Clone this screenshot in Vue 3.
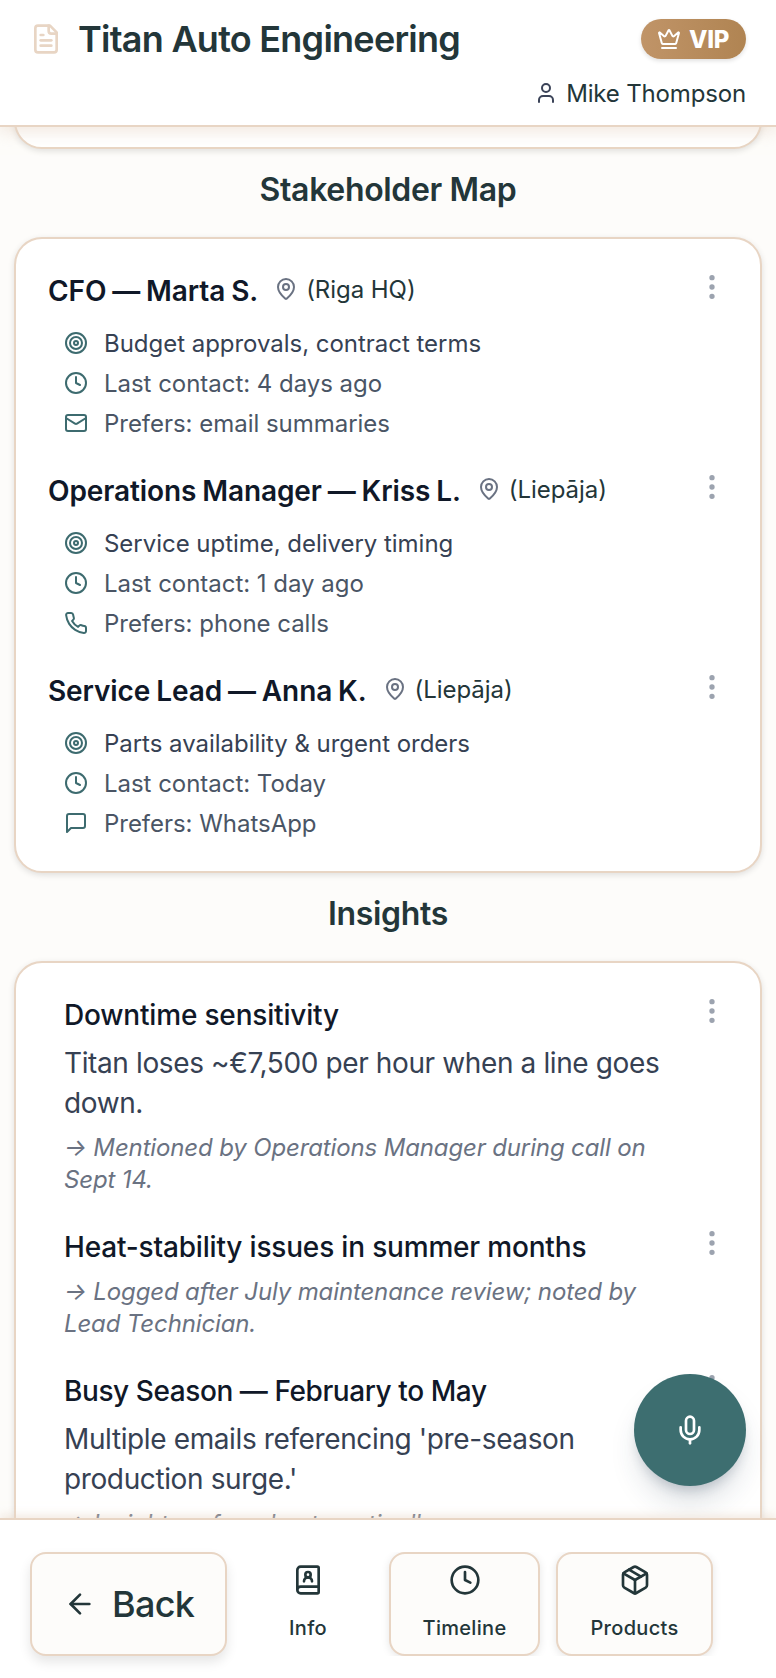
<script setup>
import { ref } from 'vue'

// inner shapes of the 24x24 stroke icons
const icons = {
  file: '<path d="M15 2H6a2 2 0 0 0-2 2v16a2 2 0 0 0 2 2h12a2 2 0 0 0 2-2V7Z"/><path d="M14 2v4a2 2 0 0 0 2 2h4"/><path d="M10 9H8"/><path d="M16 13H8"/><path d="M16 17H8"/>',
  crown: '<path d="M11.562 3.266a.5.5 0 0 1 .876 0L15.39 8.87a1 1 0 0 0 1.516.294L21.183 5.5a.5.5 0 0 1 .798.519l-2.834 10.246a1 1 0 0 1-.956.734H5.81a1 1 0 0 1-.957-.734L2.02 6.02a.5.5 0 0 1 .798-.519l4.276 3.664a1 1 0 0 0 1.516-.294z"/><path d="M5 21h14"/>',
  user: '<path d="M19 21v-2a4 4 0 0 0-4-4H9a4 4 0 0 0-4 4v2"/><circle cx="12" cy="7" r="4"/>',
  pin: '<path d="M20 10c0 4.993-5.539 10.193-7.399 11.799a1 1 0 0 1-1.202 0C9.539 20.193 4 14.993 4 10a8 8 0 0 1 16 0"/><circle cx="12" cy="10" r="3"/>',
  target: '<circle cx="12" cy="12" r="10"/><circle cx="12" cy="12" r="6"/><circle cx="12" cy="12" r="2"/>',
  clock: '<circle cx="12" cy="12" r="10"/><path d="M12 6v6l4 2"/>',
  mail: '<rect width="20" height="16" x="2" y="4" rx="2"/><path d="m22 7-8.97 5.7a1.94 1.94 0 0 1-2.06 0L2 7"/>',
  phone: '<path d="M22 16.92v3a2 2 0 0 1-2.18 2 19.79 19.79 0 0 1-8.63-3.07 19.5 19.5 0 0 1-6-6 19.79 19.79 0 0 1-3.07-8.67A2 2 0 0 1 4.11 2h3a2 2 0 0 1 2 1.72 12.84 12.84 0 0 0 .7 2.81 2 2 0 0 1-.45 2.11L8.09 9.91a16 16 0 0 0 6 6l1.27-1.27a2 2 0 0 1 2.11-.45 12.84 12.84 0 0 0 2.81.7A2 2 0 0 1 22 16.92z"/>',
  message: '<path d="M21 15a2 2 0 0 1-2 2H7l-4 4V5a2 2 0 0 1 2-2h14a2 2 0 0 1 2 2z"/>',
  more: '<circle cx="12" cy="5" r="1"/><circle cx="12" cy="12" r="1"/><circle cx="12" cy="19" r="1"/>',
  mic: '<path d="M12 2a3 3 0 0 0-3 3v7a3 3 0 0 0 6 0V5a3 3 0 0 0-3-3Z"/><path d="M19 10v2a7 7 0 0 1-14 0v-2"/><path d="M12 19v3"/>',
  back: '<path d="m12 19-7-7 7-7"/><path d="M19 12H5"/>',
  info: '<path d="M15 13a3 3 0 1 0-6 0"/><path d="M4 19.5v-15A2.5 2.5 0 0 1 6.5 2H19a1 1 0 0 1 1 1v18a1 1 0 0 1-1 1H6.5a1 1 0 0 1 0-5H20"/><circle cx="12" cy="8" r="2"/>',
  box: '<path d="M11 21.73a2 2 0 0 0 2 0l7-4A2 2 0 0 0 21 16V8a2 2 0 0 0-1-1.73l-7-4a2 2 0 0 0-2 0l-7 4A2 2 0 0 0 3 8v8a2 2 0 0 0 1 1.73z"/><path d="M12 22V12"/><path d="m3.3 7 8.7 5 8.7-5"/><path d="m7.5 4.27 9 5.15"/>'
}

const stakeholders = [
  { name: 'CFO — Marta S.', place: 'Riga HQ', focus: 'Budget approvals, contract terms', last: '4 days ago', prefers: 'email summaries', icon: 'mail' },
  { name: 'Operations Manager — Kriss L.', place: 'Liepāja', focus: 'Service uptime, delivery timing', last: '1 day ago', prefers: 'phone calls', icon: 'phone' },
  { name: 'Service Lead — Anna K.', place: 'Liepāja', focus: 'Parts availability & urgent orders', last: 'Today', prefers: 'WhatsApp', icon: 'message' }
]

const insights = [
  { title: 'Downtime sensitivity', text: 'Titan loses ~€7,500 per hour when a line goes down.', note: 'Mentioned by Operations Manager during call on Sept 14.' },
  { title: 'Heat-stability issues in summer months', note: 'Logged after July maintenance review; noted by Lead Technician.' },
  { title: 'Busy Season — February to May', text: "Multiple emails referencing 'pre-season production surge.'", note: 'Insight surfaced automatically.' }
]

const tabs = [
  { id: 'info', label: 'Info', icon: 'info' },
  { id: 'timeline', label: 'Timeline', icon: 'clock' },
  { id: 'products', label: 'Products', icon: 'box' }
]
const activeTab = ref('info')
</script>

<template>
  <div class="screen">
    <header class="top-bar">
      <div class="title-row">
        <svg class="icon large file-icon" viewBox="0 0 24 24" v-html="icons.file"></svg>
        <h1>Titan Auto Engineering</h1>
        <span class="vip">
          <svg class="icon" viewBox="0 0 24 24" v-html="icons.crown"></svg>
          <span>VIP</span>
        </span>
      </div>
      <div class="owner">
        <svg class="icon" viewBox="0 0 24 24" v-html="icons.user"></svg>
        <span>Mike Thompson</span>
      </div>
    </header>

    <main>
      <!-- tail of the card that is scrolled under the header -->
      <section class="card scrolled"></section>

      <h2>Stakeholder Map</h2>
      <section class="card">
        <article v-for="person in stakeholders" :key="person.name" class="entry">
          <div class="person">
            <div class="person-head">
              <h3>{{ person.name }}</h3>
              <span class="place">
                <svg class="icon" viewBox="0 0 24 24" v-html="icons.pin"></svg>
                <span>({{ person.place }})</span>
              </span>
            </div>
            <ul>
              <li class="focus">
                <svg class="icon" viewBox="0 0 24 24" v-html="icons.target"></svg>
                <span>{{ person.focus }}</span>
              </li>
              <li>
                <svg class="icon" viewBox="0 0 24 24" v-html="icons.clock"></svg>
                <span>Last contact: {{ person.last }}</span>
              </li>
              <li>
                <svg class="icon" viewBox="0 0 24 24" v-html="icons[person.icon]"></svg>
                <span>Prefers: {{ person.prefers }}</span>
              </li>
            </ul>
          </div>
          <button class="more" aria-label="More">
            <svg class="icon large" viewBox="0 0 24 24" v-html="icons.more"></svg>
          </button>
        </article>
      </section>

      <h2>Insights</h2>
      <section class="card">
        <article v-for="item in insights" :key="item.title" class="entry">
          <div class="insight">
            <h4 :class="{ dashed: item.title.includes('—') }">{{ item.title }}</h4>
            <p v-if="item.text" class="text">{{ item.text }}</p>
            <p class="note">→ {{ item.note }}</p>
          </div>
          <button class="more" aria-label="More">
            <svg class="icon large" viewBox="0 0 24 24" v-html="icons.more"></svg>
          </button>
        </article>
      </section>
    </main>

    <button class="mic" aria-label="Record">
      <svg class="icon large" viewBox="0 0 24 24" v-html="icons.mic"></svg>
    </button>

    <footer class="bottom-bar">
      <button class="back">
        <svg class="icon large" viewBox="0 0 24 24" v-html="icons.back"></svg>
        <span>Back</span>
      </button>
      <nav>
        <button
          v-for="tab in tabs"
          :key="tab.id"
          :class="['tab', tab.id, { active: activeTab === tab.id }]"
          @click="activeTab = tab.id"
        >
          <svg class="icon large" viewBox="0 0 24 24" v-html="icons[tab.icon]"></svg>
          <span>{{ tab.label }}</span>
        </button>
      </nav>
    </footer>
  </div>
</template>

<style>
body {
  margin: 0;
  overflow: hidden;
}
</style>

<style scoped>
.screen {
  --line: #e8d5c4;
  --ink: #233639;
  --teal: #3d6b6f;
  --cream: #fdfcfa;

  position: relative;
  display: flex;
  flex-direction: column;
  height: 1678px;
  overflow: hidden;
  background: var(--cream);
  color: var(--ink);
  font-family: Inter, "Noto Sans", sans-serif;
}

h1, h2, h3, h4, p, ul {
  margin: 0;
  padding: 0;
}

button {
  padding: 0;
  border: none;
  background: none;
  color: inherit;
  font-family: inherit;
}

.icon {
  display: block;
  flex: none;
  width: 24px;
  height: 24px;
  fill: none;
  stroke: currentColor;
  stroke-width: 2;
  stroke-linecap: round;
  stroke-linejoin: round;
}

.icon.large {
  width: 32px;
  height: 32px;
}

/* header */
.top-bar {
  z-index: 2;
  flex: none;
  box-sizing: border-box;
  height: 127px;
  padding: 19px 30px 0;
  background: #fff;
  border-bottom: 2px solid var(--line);
  box-shadow: 0 4px 16px rgba(232, 213, 196, 0.6);
}

.title-row {
  display: flex;
  align-items: center;
  height: 40px;
  gap: 16px;
}

.file-icon {
  color: var(--line);
}

h1 {
  flex: 1;
  font-size: 36px;
  font-weight: 600;
  line-height: 40px;
  letter-spacing: -0.74px;
  white-space: nowrap;
}

.vip {
  display: flex;
  align-items: center;
  box-sizing: border-box;
  width: 105px;
  height: 40px;
  padding: 0 16px;
  gap: 8px;
  border-radius: 20px;
  background: linear-gradient(90deg, #c09468, #b08452);
  box-shadow: 0 2px 4px rgba(0, 0, 0, 0.12);
  color: #fff;
  font-size: 24px;
  font-weight: 800;
  letter-spacing: -0.3px;
}

.owner {
  display: flex;
  justify-content: flex-end;
  align-items: center;
  height: 36px;
  margin-top: 16px;
  gap: 8px;
  font-size: 24px;
  letter-spacing: -0.16px;
}

.owner .icon {
  color: #3b4358;
}

/* content */
main {
  flex: 1;
  min-height: 0;
  padding: 0 14px;
  overflow: hidden;
}

h2 {
  padding: 21px 0 27px;
  font-size: 32px;
  font-weight: 600;
  line-height: 40px;
  letter-spacing: -0.34px;
  text-align: center;
}

.card {
  display: flex;
  flex-direction: column;
  gap: 32px;
  padding: 32px;
  background: #fff;
  border: 2px solid var(--line);
  border-radius: 28px;
  box-shadow: 0 2px 6px rgba(0, 0, 0, 0.12);
}

.card.scrolled {
  margin-top: -46px;
}

.entry {
  display: flex;
  align-items: flex-start;
}

.person, .insight {
  flex: 1;
}

.person-head {
  display: flex;
  height: 40px;
  gap: 16px;
}

h3 {
  color: #101828;
  font-size: 28px;
  font-weight: 600;
  line-height: 40px;
  letter-spacing: -0.1px;
  word-spacing: -1px;
}

.place {
  display: flex;
  align-items: center;
  height: 36px;
  gap: 8px;
  font-size: 24px;
  letter-spacing: -0.05px;
}

.place .icon {
  color: #6a7282;
}

ul {
  display: flex;
  flex-direction: column;
  gap: 8px;
  margin-top: 16px;
  padding-left: 16px;
  list-style: none;
}

li {
  display: flex;
  align-items: center;
  height: 32px;
  gap: 16px;
  color: #4a5565;
  font-size: 24px;
  line-height: 32px;
  letter-spacing: -0.03px;
}

/* optical centering next to the icon */
li span {
  margin-top: 2px;
}

li.focus {
  color: #364153;
}

li .icon {
  color: var(--teal);
}

.more {
  color: #9ca3af;
}

.insight {
  padding: 0 32px 0 16px;
}

h4 {
  color: #101828;
  font-size: 28px;
  font-weight: 500;
  line-height: 40px;
  letter-spacing: -0.18px;
}

h4.dashed {
  letter-spacing: -0.42px;
}

.text {
  margin-top: 8px;
  color: #364153;
  font-size: 28px;
  line-height: 40px;
  letter-spacing: -0.38px;
}

.note {
  margin: 9px 0 -1px;
  color: #6a7282;
  font-size: 24px;
  font-style: italic;
  line-height: 32px;
  letter-spacing: -0.14px;
}

/* floating record button */
.mic {
  position: absolute;
  right: 30px;
  bottom: 192px;
  z-index: 1;
  display: flex;
  justify-content: center;
  align-items: center;
  width: 112px;
  height: 112px;
  border-radius: 50%;
  background: #3d6e70;
  box-shadow: 0 20px 30px -6px rgba(35, 54, 80, 0.18), 0 8px 12px -4px rgba(35, 54, 80, 0.2);
  color: #fff;
}

/* bottom bar */
.bottom-bar {
  z-index: 2;
  display: flex;
  flex: none;
  box-sizing: border-box;
  height: 160px;
  padding: 32px 30px 22px;
  gap: 16px;
  background: #fff;
  border-top: 2px solid var(--line);
  box-shadow: 0 -2px 10px rgba(232, 213, 196, 0.6);
}

.back {
  display: flex;
  align-items: center;
  box-sizing: border-box;
  width: 197px;
  height: 104px;
  padding: 0 32px;
  gap: 16px;
  background: var(--cream);
  border: 2px solid var(--line);
  border-radius: 16px;
  box-shadow: 0 6px 12px rgba(0, 0, 0, 0.1);
  font-size: 36px;
  font-weight: 500;
  letter-spacing: -0.7px;
}

nav {
  display: flex;
  flex: 1;
  height: 104px;
  gap: 16px;
  overflow: hidden;
}

.tab {
  display: flex;
  flex-direction: column;
  align-items: center;
  box-sizing: border-box;
  height: 104px;
  padding-top: 10px;
  gap: 16px;
  background: var(--cream);
  border: 2px solid var(--line);
  border-radius: 16px;
  box-shadow: 0 2px 8px rgba(0, 0, 0, 0.1);
  font-size: 20px;
  font-weight: 500;
  line-height: 32px;
  letter-spacing: 0.3px;
}

.tab.active {
  background: none;
  border-color: transparent;
  box-shadow: none;
}

.info {
  width: 130px;
}

.timeline {
  width: 151px;
}

.products {
  width: 157px;
}
</style>
